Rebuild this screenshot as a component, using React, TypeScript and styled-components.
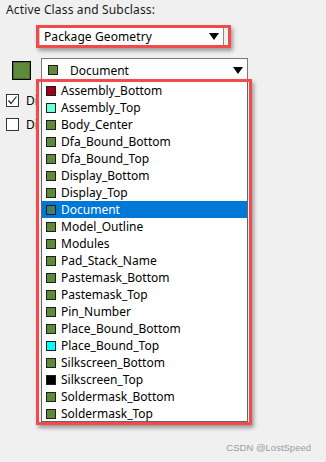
import React from "react";
import styled, { createGlobalStyle } from "styled-components";

const Global = createGlobalStyle`
  html, body { margin: 0; padding: 0; background: #f0f0f0; }
  #root { width: 326px; height: 462px; }
`;

const RED = "#f2494b";
const GREEN = "#5f8a3a";

const Page = styled.div`
  width: 326px;
  height: 462px;
  box-sizing: border-box;
  background: #f0f0f0;
  display: flex;
  flex-direction: column;
  font-family: "Noto Sans", "Open Sans", sans-serif;
  font-size: 12px;
  color: #000;
  overflow: hidden;
`;

const Label = styled.div`
  margin: 2px 0 0 6px;
  line-height: 16px;
  color: #1a1a1a;
  letter-spacing: 0.15px;
`;

const Highlight = styled.div<{ $w: number; $h: number }>`
  box-sizing: border-box;
  width: ${(p) => p.$w}px;
  height: ${(p) => p.$h}px;
  border: 3px solid ${RED};
  box-shadow: 2px 3px 4px rgba(0, 0, 0, 0.35);
`;

const ClassBox = styled(Highlight)`
  margin: 7px 0 0 36px;
  display: flex;
`;

const ClassCombo = styled.div`
  width: 185px;
  height: 100%;
  box-sizing: border-box;
  background: #fff;
  border-left: 1px solid #c8c8c8;
  border-right: 1px solid #8a8a8a;
  display: flex;
  align-items: center;
  padding: 0 4px 0 4px;
  line-height: 17px;
`;

const ComboText = styled.span`
  flex: 1;
  white-space: nowrap;
  letter-spacing: 0.1px;
`;

const Arrow = styled.span`
  width: 0;
  height: 0;
  border-left: 5.5px solid transparent;
  border-right: 5.5px solid transparent;
  border-top: 7px solid #000;
`;

const SubRow = styled.div`
  margin-top: 10px;
  display: flex;
  align-items: center;
  height: 24px;
`;

const BigSwatch = styled.div`
  margin: 0 0 0 12px;
  width: 19px;
  height: 19px;
  box-sizing: border-box;
  border: 1px solid #000;
  background: ${GREEN};
  box-shadow: inset 0 0 0 1px #4a6a2c;
`;

const SubCombo = styled.div`
  position: relative;
  margin-left: 10px;
  width: 207px;
  height: 24px;
  box-sizing: border-box;
  background: #fff;
  border: 1px solid #7a7a7a;
  display: flex;
  align-items: center;
  padding: 0 4px 0 6px;
`;

const Swatch = styled.span<{ $c: string }>`
  display: inline-block;
  width: 10px;
  height: 10px;
  box-sizing: border-box;
  border: 1px solid #1e1e1e;
  background: ${(p) => p.$c};
  flex: none;
`;

const SubText = styled.span`
  flex: 1;
  margin-left: 12px;
  white-space: nowrap;
`;

const Checks = styled.div`
  margin-top: 11px;
  display: flex;
  flex-direction: column;
  gap: 10px;
`;

const CheckRow = styled.div`
  display: flex;
  align-items: center;
  height: 14px;
  padding-left: 6px;
  gap: 7px;
  white-space: nowrap;
`;

const Box = styled.span`
  width: 13px;
  height: 13px;
  box-sizing: border-box;
  border: 1px solid #333;
  background: #fff;
  display: flex;
  align-items: center;
  justify-content: center;
`;

const Popup = styled(Highlight)`
  position: absolute;
  top: 20px;
  left: -6px;
  z-index: 2;
  background: #f0f0f0;
  padding: 0 1px 0 2px;
`;

const List = styled.ul`
  list-style: none;
  margin: 0;
  padding: 0;
  height: 100%;
  box-sizing: border-box;
  background: #fff;
  border-left: 1px solid #646464;
  border-right: 1px solid #646464;
  border-bottom: 1px solid #646464;
`;

const Item = styled.li<{ $sel?: boolean }>`
  height: 17px;
  display: flex;
  align-items: center;
  padding-left: 4px;
  gap: 5px;
  white-space: nowrap;
  line-height: 17px;
  background: ${(p) => (p.$sel ? "#0078d7" : "transparent")};
  color: ${(p) => (p.$sel ? "#fff" : "#000")};
`;

const Mark = styled.div`
  margin-top: auto;
  align-self: flex-end;
  margin-right: 15px;
  margin-bottom: 9px;
  font-size: 9.5px;
  color: #9c9c9c;
  font-family: "Liberation Sans", Arial, sans-serif;
`;

const items: [string, string][] = [
  ["Assembly_Bottom", "#a0001c"],
  ["Assembly_Top", "#6cffd6"],
  ["Body_Center", GREEN],
  ["Dfa_Bound_Bottom", GREEN],
  ["Dfa_Bound_Top", GREEN],
  ["Display_Bottom", GREEN],
  ["Display_Top", GREEN],
  ["Document", "#3f7f6e"],
  ["Model_Outline", GREEN],
  ["Modules", GREEN],
  ["Pad_Stack_Name", GREEN],
  ["Pastemask_Bottom", GREEN],
  ["Pastemask_Top", GREEN],
  ["Pin_Number", GREEN],
  ["Place_Bound_Bottom", GREEN],
  ["Place_Bound_Top", "#00ffff"],
  ["Silkscreen_Bottom", GREEN],
  ["Silkscreen_Top", "#000000"],
  ["Soldermask_Bottom", GREEN],
  ["Soldermask_Top", GREEN],
];

export default function App() {
  return (
    <Page>
      <Global />
      <Label>Active Class and Subclass:</Label>
      <ClassBox $w={195} $h={23}>
        <ClassCombo>
          <ComboText>Package Geometry</ComboText>
          <Arrow />
        </ClassCombo>
      </ClassBox>
      <SubRow>
        <BigSwatch />
        <SubCombo>
          <Swatch $c={GREEN} />
          <SubText>Document</SubText>
          <Arrow />
          <Popup $w={216} $h={346}>
            <List>
              {items.map(([name, c]) => (
                <Item key={name} $sel={name === "Document"}>
                  <Swatch $c={c} />
                  {name}
                </Item>
              ))}
            </List>
          </Popup>
        </SubCombo>
      </SubRow>
      <Checks>
        <CheckRow>
          <Box>
            <svg width="11" height="11" viewBox="0 0 11 11">
              <polyline points="1.5,5.5 4,8.5 9.5,1.5" fill="none" stroke="#222" strokeWidth="1.2" />
            </svg>
          </Box>
          <span>Display</span>
        </CheckRow>
        <CheckRow>
          <Box />
          <span>Display</span>
        </CheckRow>
      </Checks>
      <Mark>CSDN @LostSpeed</Mark>
    </Page>
  );
}
